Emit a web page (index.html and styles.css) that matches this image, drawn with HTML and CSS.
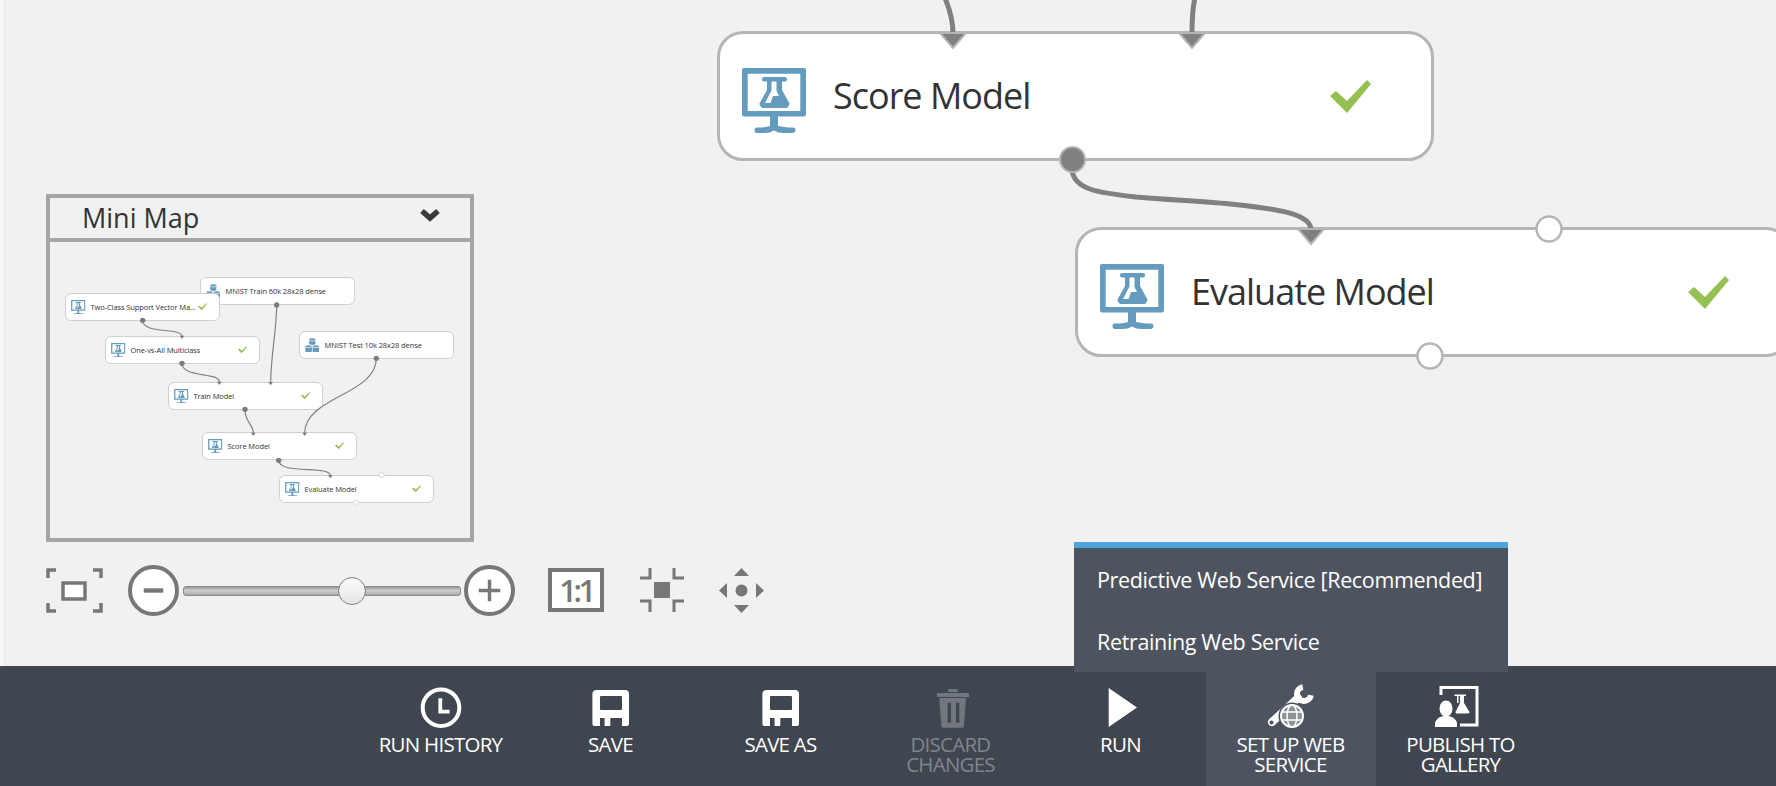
FILE: index.html
```html
<!DOCTYPE html>
<html lang="en">
<head>
  <meta charset="UTF-8" />
  <title>Experiment canvas</title>
  <meta name="viewport" content="width=device-width, initial-scale=1.0" />
  <link rel="stylesheet" href="styles.css">
</head>
<body>
  <!-- shared icons -->
  <svg class="defs" aria-hidden="true">
    <symbol id="ico-module" viewBox="0 0 64 65">
      <path fill="#659bbd" fill-rule="evenodd" d="M2 0H62Q64 0 64 2V46Q64 48.500 62 48.500H36V58Q43 59 46 59.500H51Q53.500 59.500 53.500 62T51 65H41Q36 65 32 62.500Q28 65 23 65H15Q12.500 65 12.500 62T15 59.500H19Q25 59 28 58V48.500H2Q0 48.500 0 46V2Q0 0 2 0ZM5.700 5.700V43H58.300V5.700Z"/>
      <rect x="20" y="9" width="25" height="4.500" rx="2" fill="#659bbd"/>
      <path fill="#659bbd" fill-rule="evenodd" d="M25 13H40V22L47.500 35.500Q47.500 37 45 40H20Q17 37 17.500 35.500L25 22ZM29.500 13V22.500L23 35H28.500L31 28H37L34.500 23V13Z"/>
    </symbol>
    <symbol id="ico-data" viewBox="0 0 42 42">
      <path fill="#659bbd" d="M12 5Q12 1 21 1T30 5V17Q30 20 21 20T12 17Z"/>
      <path fill="#659bbd" d="M1 24Q1 21 10 21T20 24V38Q20 42 10 42T1 38Z"/>
      <path fill="#659bbd" d="M22 24Q22 21 31 21T41 24V38Q41 42 31 42T22 38Z"/>
      <path fill="none" stroke="#fff" stroke-width="2" d="M12 7Q21 11 30 7M1 26Q10 30 20 26M22 26Q31 30 41 26"/>
    </symbol>
    <symbol id="ico-check" viewBox="0 0 41 33">
      <polygon fill="#95c152" points="0,16 6,11 17,21 37,0 41,4 17,33"/>
    </symbol>
  </svg>

  <div class="page">
    <main class="canvas">
      <div class="node node-score">
        <svg class="node-icon"><use href="#ico-module"/></svg>
        <span class="node-name">Score Model</span>
        <svg class="node-check"><use href="#ico-check"/></svg>
      </div>
      <div class="node node-evaluate">
        <svg class="node-icon"><use href="#ico-module"/></svg>
        <span class="node-name">Evaluate Model</span>
        <svg class="node-check"><use href="#ico-check"/></svg>
      </div>

      <svg class="wires" viewBox="0 0 1776 666">
        <g fill="none" stroke="#808080" stroke-width="5">
          <path d="M945 -2C950 10 953 20 953 34"/>
          <path d="M1195 -2C1192 10 1192 20 1192 34"/>
          <path d="M1072 170C1074 190 1100 193 1136 197C1170 200 1200 201 1230 204C1280 209 1311 214 1311 230"/>
        </g>
        <g fill="#808080" stroke="#b5b5b5" stroke-width="2">
          <polygon points="940,33 966,33 953,48"/>
          <polygon points="1179,33 1205,33 1192,48"/>
          <polygon points="1298,229 1324,229 1311,244"/>
          <circle cx="1072.500" cy="159.500" r="12.500"/>
        </g>
        <g fill="#fff" stroke="#b5b5b5" stroke-width="2.500">
          <circle cx="1430" cy="356" r="12.500"/>
          <circle cx="1549" cy="229" r="12.500"/>
        </g>
      </svg>

      <div class="side-tools">
        <section class="minimap">
          <header class="minimap-head">
            <span>Mini Map</span>
            <svg class="chevron" viewBox="0 0 20 14"><path d="M2 3L10 10L18 3" fill="none" stroke="#3a3a3a" stroke-width="5.500"/></svg>
          </header>
          <div class="minimap-body">
            <div class="mini mini-train-data">
              <svg class="mini-icon"><use href="#ico-data"/></svg>
              <span class="mini-name">MNIST Train 60k 28x28 dense</span>
            </div>
            <div class="mini mini-svm">
              <svg class="mini-icon"><use href="#ico-module"/></svg>
              <span class="mini-name">Two-Class Support Vector Ma...</span>
              <svg class="mini-check"><use href="#ico-check"/></svg>
            </div>
            <div class="mini mini-ova">
              <svg class="mini-icon"><use href="#ico-module"/></svg>
              <span class="mini-name">One-vs-All Multiclass</span>
              <svg class="mini-check"><use href="#ico-check"/></svg>
            </div>
            <div class="mini mini-test-data">
              <svg class="mini-icon"><use href="#ico-data"/></svg>
              <span class="mini-name">MNIST Test 10k 28x28 dense</span>
            </div>
            <div class="mini mini-train">
              <svg class="mini-icon"><use href="#ico-module"/></svg>
              <span class="mini-name">Train Model</span>
              <svg class="mini-check"><use href="#ico-check"/></svg>
            </div>
            <div class="mini mini-score">
              <svg class="mini-icon"><use href="#ico-module"/></svg>
              <span class="mini-name">Score Model</span>
              <svg class="mini-check"><use href="#ico-check"/></svg>
            </div>
            <div class="mini mini-evaluate">
              <svg class="mini-icon"><use href="#ico-module"/></svg>
              <span class="mini-name">Evaluate Model</span>
              <svg class="mini-check"><use href="#ico-check"/></svg>
            </div>
            <svg class="mini-wires" viewBox="60 186 1260 888">
              <g fill="none" stroke="#808080" stroke-width="3.500">
                <path d="M338 421C338 465 456 440 456 470"/>
                <path d="M456 550C456 595 568 575 568 606"/>
                <path d="M740 375C740 450 722 530 722 608"/>
                <path d="M1039 535C1039 645 824 650 824 760"/>
                <path d="M645 688C645 730 670 730 670 760"/>
                <path d="M746 841C746 885 901 855 901 887"/>
              </g>
              <g fill="#7c7c7c">
                <circle cx="338" cy="421" r="8"/>
                <circle cx="456" cy="550" r="8"/>
                <circle cx="740" cy="375" r="8"/>
                <circle cx="1039" cy="535" r="8"/>
                <circle cx="645" cy="688" r="8"/>
                <circle cx="746" cy="841" r="8"/>
                <polygon points="449,467 463,467 456,477"/>
                <polygon points="561,605 575,605 568,615"/>
                <polygon points="715,606 729,606 722,616"/>
                <polygon points="817,758 831,758 824,768"/>
                <polygon points="663,758 677,758 670,768"/>
                <polygon points="894,885 908,885 901,895"/>
              </g>
              <g fill="#fff" stroke="#ccc" stroke-width="2">
                <circle cx="1055" cy="885" r="8"/>
                <circle cx="978" cy="968" r="8"/>
              </g>
            </svg>
          </div>
        </section>

        <div class="zoom-tools">
          <svg class="tool-fit" viewBox="0 0 57 45">
            <path fill="none" stroke="#777" stroke-width="3.500" d="M2 10V2H10M47 2H55V10M55 35V43H47M10 43H2V35"/>
            <rect x="17" y="15" width="22" height="16" fill="#fff" stroke="#777" stroke-width="3.500"/>
          </svg>
          <div class="round-btn">
            <svg viewBox="0 0 44 44"><path d="M12 22H32" stroke="#777" stroke-width="4.500"/></svg>
          </div>
          <div class="slider"><div class="slider-thumb"></div></div>
          <div class="round-btn">
            <svg viewBox="0 0 44 44"><path d="M11 22H33M22 11V33" stroke="#777" stroke-width="3.500"/></svg>
          </div>
          <div class="tool-ratio">1:1</div>
          <svg class="tool-actual" viewBox="0 0 44 44">
            <path fill="none" stroke="#777" stroke-width="3" d="M0 10H10V0M34 0V10H44M44 33H34V44M10 44V33H0"/>
            <rect x="14" y="14" width="16" height="16" fill="#777"/>
          </svg>
          <svg class="tool-pan" viewBox="0 0 45 45">
            <g fill="#777">
              <polygon points="22.500,0 30,8 15,8"/>
              <polygon points="22.500,45 30,37 15,37"/>
              <polygon points="0,22.500 8,15 8,30"/>
              <polygon points="45,22.500 37,15 37,30"/>
              <circle cx="22.500" cy="22.500" r="6"/>
            </g>
          </svg>
        </div>
      </div>
    </main>

    <footer class="command-bar">
      <div class="cmd">
        <svg class="cmd-icon" viewBox="0 0 60 46">
          <circle cx="30" cy="23.700" r="18.300" fill="none" stroke="#fff" stroke-width="4"/>
          <path d="M29.300 14.300V27.700H38.600" fill="none" stroke="#fff" stroke-width="3.800"/>
        </svg>
        <span class="cmd-label">RUN HISTORY</span>
      </div>
      <div class="cmd">
        <svg class="cmd-icon" viewBox="0 0 60 46">
          <path fill="#fff" fill-rule="evenodd" d="M16 6H44Q48 6 48 10V40Q48 42 46 42H41V34H29.300V42H23.600V34H19V42H13.400Q11.400 42 11.400 40V10Q11.400 6 16 6ZM20 12Q19 12 19 13V25Q19 26 20 26H40Q41 26 41 25V13Q41 12 40 12Z"/>
        </svg>
        <span class="cmd-label">SAVE</span>
      </div>
      <div class="cmd">
        <svg class="cmd-icon" viewBox="0 0 60 46">
          <path fill="#fff" fill-rule="evenodd" d="M16 6H44Q48 6 48 10V40Q48 42 46 42H41V34H29.300V42H23.600V34H19V42H13.400Q11.400 42 11.400 40V10Q11.400 6 16 6ZM20 12Q19 12 19 13V25Q19 26 20 26H40Q41 26 41 25V13Q41 12 40 12Z"/>
        </svg>
        <span class="cmd-label">SAVE AS</span>
      </div>
      <div class="cmd cmd-disabled">
        <svg class="cmd-icon" viewBox="0 0 60 46">
          <g fill="#72777f">
            <rect x="27" y="5" width="10" height="3" rx="1.500"/>
            <rect x="16" y="9" width="32" height="4"/>
            <path fill-rule="evenodd" d="M18.300 14H45L43 42Q43 43.700 41 43.700H22Q20.300 43.700 20.300 42ZM26.700 18.700V38.700H30V18.700ZM35 18.700V38.700H38.300V18.700Z"/>
          </g>
        </svg>
        <span class="cmd-label">DISCARD CHANGES</span>
      </div>
      <div class="cmd">
        <svg class="cmd-icon" viewBox="0 0 60 46">
          <polygon fill="#fff" points="17.700,4 46,23.500 17.700,43"/>
        </svg>
        <span class="cmd-label">RUN</span>
      </div>
      <div class="cmd cmd-active">
        <svg class="cmd-icon" viewBox="0 0 60 46">
          <path d="M11 38L37 14" stroke="#fff" stroke-width="8" stroke-linecap="round"/>
          <path d="M41.800 3.100A7 7 0 1 0 49.900 11.200" fill="none" stroke="#fff" stroke-width="6"/>
          <circle cx="10.500" cy="38.500" r="2" fill="#4d545f"/>
          <circle cx="31" cy="32" r="13.500" fill="#4d545f"/>
          <circle cx="31" cy="32" r="11" fill="#8d9198" stroke="#fff" stroke-width="2"/>
          <ellipse cx="31" cy="32" rx="5" ry="11" fill="none" stroke="#fff" stroke-width="1.500"/>
          <path d="M21 28H41M21 36H41" stroke="#fff" stroke-width="1.300"/>
        </svg>
        <span class="cmd-label">SET UP WEB SERVICE</span>
        <div class="cmd-menu">
          <div class="cmd-menu-item">Predictive Web Service [Recommended]</div>
          <div class="cmd-menu-item">Retraining Web Service</div>
        </div>
      </div>
      <div class="cmd">
        <svg class="cmd-icon" viewBox="0 0 60 46">
          <path d="M10 11V3.500H46V41H29" fill="none" stroke="#fff" stroke-width="3"/>
          <ellipse cx="15" cy="24.500" rx="6.500" ry="8" fill="#fff"/>
          <path d="M4 43V39Q5 34 12 32H18Q25 34 26 39V43Z" fill="#fff"/>
          <path fill="#fff" d="M23.500 10.500H35V12H33V19L38.500 28Q38.500 29.500 37 29.500H26Q24.500 29.500 24.500 28L27 23L29 19V12H27.500V19H26V12H23.500Z"/>
        </svg>
        <span class="cmd-label">PUBLISH TO GALLERY</span>
      </div>
    </footer>
  </div>
</body>
</html>
```

FILE: styles.css
```css
* { box-sizing: border-box; }
body { margin: 0; font-family: 'Open Sans', 'Liberation Sans', sans-serif; color: #333; }
.defs { position: absolute; width: 0; height: 0; }
.page { display: flex; flex-direction: column; width: 1776px; height: 786px; overflow: hidden; }

/* canvas */
.canvas {
  position: relative;
  flex: 1;
  overflow: hidden;
  background: linear-gradient(to right, #f8f8f8 4px, #e8e8e8 4px, #e8e8e8 5px, #f1f1f1 5px);
}
.wires { position: absolute; left: 0; top: 0; width: 1776px; height: 666px; }

.node {
  position: absolute;
  display: flex;
  align-items: center;
  width: 717px;
  height: 130px;
  padding: 0 60px 0 22px;
  background: #fff;
  border: 3px solid #b5b5b5;
  border-radius: 26px;
}
.node-score { left: 717px; top: 31px; }
.node-evaluate { left: 1075px; top: 227px; }
.node-icon { width: 64px; height: 65px; margin-top: 9px; flex: none; }
.node-name { margin: -2px 0 0 27px; font-size: 36px; letter-spacing: -1px; color: #333; white-space: nowrap; }
.node-check { width: 41px; height: 33px; margin-left: auto; flex: none; }

/* mini map + zoom */
.side-tools { position: absolute; left: 46px; top: 194px; display: flex; flex-direction: column; gap: 22px; }
.minimap { width: 428px; border: 4px solid #a5a5a5; }
.minimap-head {
  display: flex;
  align-items: center;
  justify-content: space-between;
  height: 44px;
  padding: 0 30px 2px 32px;
  border-bottom: 4px solid #a5a5a5;
  font-size: 27px;
  color: #333;
}
.chevron { width: 20px; height: 14px; margin-top: -4px; }
.minimap-body { position: relative; height: 296px; }
.mini-wires { position: absolute; left: 0; top: 0; width: 420px; height: 296px; }
.mini {
  position: absolute;
  display: flex;
  align-items: center;
  width: 155px;
  height: 28px;
  padding: 0 12px 0 5px;
  background: #fff;
  border: 1px solid #d0d0d0;
  border-radius: 6px;
}
.mini-icon { width: 14.500px; height: 14.500px; flex: none; }
.mini-name {
  margin-left: 5px;
  font-size: 7.500px;
  letter-spacing: -0.1px;
  color: #333;
  white-space: nowrap;
}
.mini-check { width: 9px; height: 7.500px; margin-left: auto; flex: none; }
.mini-train-data { left: 150px; top: 35px; }
.mini-svm { left: 15px; top: 51px; }
.mini-ova { left: 55px; top: 94px; }
.mini-test-data { left: 249px; top: 89px; }
.mini-train { left: 118px; top: 140px; }
.mini-score { left: 152px; top: 190px; }
.mini-evaluate { left: 229px; top: 233px; }

.zoom-tools { display: flex; align-items: center; height: 52px; }
.tool-fit { width: 57px; height: 45px; flex: none; }
.round-btn {
  width: 51px;
  height: 51px;
  flex: none;
  background: #fff;
  border: 4px solid #777;
  border-radius: 50%;
}
.round-btn svg { display: block; width: 43px; height: 43px; }
.tool-fit + .round-btn { margin-left: 25px; }
.slider {
  position: relative;
  width: 278px;
  height: 10px;
  margin: 2px 3px 0 4px;
  flex: none;
  background: linear-gradient(#9a9a9a, #cfcfcf 45%, #a8a8a8);
  border: 1px solid #8a8a8a;
  border-radius: 3px;
}
.slider-thumb {
  position: absolute;
  left: 154px;
  top: -10px;
  width: 28px;
  height: 28px;
  background: linear-gradient(#fbfbfb, #e4e4e4);
  border: 1.500px solid #808080;
  border-radius: 50%;
}
.tool-ratio {
  display: flex;
  align-items: center;
  justify-content: center;
  width: 56px;
  height: 44px;
  margin-left: 33px;
  flex: none;
  background: #fff;
  border: 4px solid #777;
  font-size: 31px;
  font-weight: 600;
  line-height: 1;
  letter-spacing: -3.500px;
  color: #777;
}
.tool-actual { width: 44px; height: 44px; margin-left: 36px; flex: none; }
.tool-pan { width: 45px; height: 45px; margin-left: 35px; flex: none; }

/* command bar */
.command-bar {
  display: flex;
  height: 120px;
  padding-left: 356px;
  background: #3f4650;
}
.cmd {
  position: relative;
  display: flex;
  flex-direction: column;
  align-items: center;
  width: 170px;
  padding-top: 18px;
  color: #fff;
}
.cmd-active { background: #4d545f; }
.cmd-disabled { color: #80858c; }
.cmd-icon { width: 60px; height: 46px; flex: none; }
.cmd-label {
  width: 150px;
  margin: 4px 1px 0 0;
  font-size: 20.500px;
  line-height: 20px;
  letter-spacing: -0.75px;
  text-align: center;
}
.cmd-menu {
  position: absolute;
  left: -132px;
  bottom: 114px;
  width: 434px;
  height: 130px;
  padding-top: 6px;
  background: #4d545f;
  border-top: 6px solid #4ea5d9;
  color: #fff;
}
.cmd-menu-item { height: 62px; padding: 11px 0 0 23px; font-size: 21.500px; letter-spacing: -0.35px; white-space: nowrap; }
```
